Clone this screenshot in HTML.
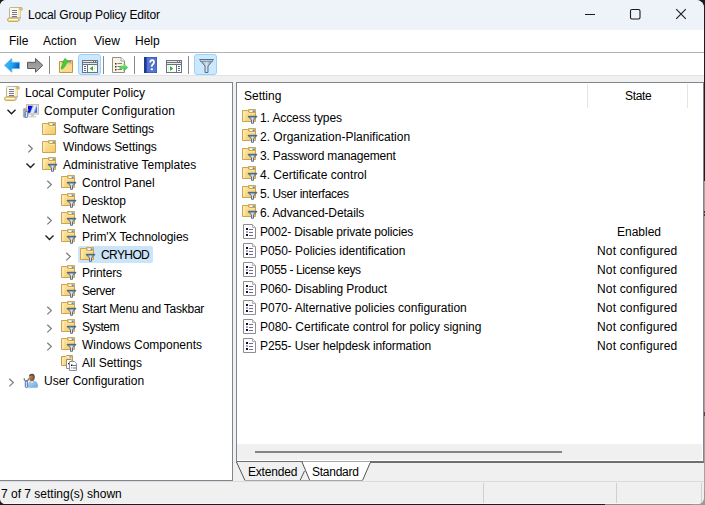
<!DOCTYPE html>
<html><head><meta charset="utf-8">
<style>
*{margin:0;padding:0;box-sizing:border-box}
html,body{width:705px;height:505px;overflow:hidden;background:#1d1d1f}
body{font-family:"Liberation Sans",sans-serif;font-size:12px;color:#000;position:relative}
.a{position:absolute}
.t{position:absolute;white-space:nowrap;line-height:18px;height:18px}
#win{position:absolute;left:0;top:0;width:704px;height:504px;background:#f0f0f0;border-radius:6px 8px 6px 5px;overflow:hidden}
svg.ov{position:absolute;left:0;top:0}
</style></head><body>
<div class="a" style="left:704px;top:181px;width:1px;height:324px;background:#a2a2a2"></div>
<div class="a" style="left:605px;top:504px;width:100px;height:1px;background:#8c8c8c"></div>
<div class="a" style="left:692px;top:490px;width:13px;height:15px;background:#9a9a9a"></div>
<div class="a" style="left:704px;top:211px;width:1px;height:2px;background:#3a3a3a"></div>
<div class="a" style="left:704px;top:214px;width:1px;height:2px;background:#3a3a3a"></div>
<div class="a" style="left:704px;top:412px;width:1px;height:4px;background:#5a3a5a"></div>
<div id="win">
 <div class="a" style="left:0;top:0;width:704px;height:30px;background:#eef2f9"></div>
 <div class="a" style="left:0;top:30px;width:704px;height:22px;background:#fff"></div>
 <div class="a" style="left:0;top:52px;width:704px;height:1px;background:#b3b3b3"></div>
 <div class="a" style="left:0;top:53px;width:704px;height:22px;background:#fff"></div>
 <div class="a" style="left:0;top:75px;width:704px;height:1px;background:#e3e3e3"></div>
 <!-- left pane -->
 <div class="a" style="left:0;top:82px;width:233px;height:399px;background:#fff;border-top:1px solid #7f848e;border-right:1px solid #7f848e;border-bottom:1px solid #7f848e"></div>
 <!-- right pane -->
 <div class="a" style="left:236px;top:82px;width:468px;height:381px;background:#fff;border:1px solid #7f848e;border-bottom:2px solid #6e6e6e"></div>
 <div class="a" style="left:237px;top:444px;width:465px;height:16px;background:#f0f0f0"></div>
 <div class="a" style="left:255px;top:451px;width:307px;height:2px;background:#858585"></div>
 <!-- header col separators -->
 <div class="a" style="left:587px;top:84px;width:1px;height:24px;background:#e5e5e5"></div>
 <div class="a" style="left:687px;top:84px;width:1px;height:24px;background:#e5e5e5"></div>
 <!-- CRYHOD highlight -->
 <div class="a" style="left:78px;top:246px;width:75px;height:17px;background:#cce4f7;border-radius:2px"></div>
 <!-- status bar -->
 <div class="a" style="left:233px;top:481px;width:471px;height:1px;background:#dcdcdc"></div>
 <div class="a" style="left:0;top:481px;width:704px;height:1px;background:#dcdcdc"></div>
 <div class="a" style="left:483px;top:483px;width:1px;height:20px;background:#d0d0d0"></div>
 <div class="a" style="left:616px;top:483px;width:1px;height:20px;background:#d0d0d0"></div>
 <div class="a" style="left:0;top:503px;width:704px;height:1px;background:#f7f7f7"></div>
 <div class="a" style="left:701px;top:483px;width:1px;height:20px;background:#d0d0d0"></div>
 <!-- pressed buttons -->
 <div class="a" style="left:78px;top:54px;width:23px;height:21px;background:#cce8ff;border:1px solid #99d1ff;border-radius:3px"></div>
 <div class="a" style="left:194px;top:54px;width:23px;height:21px;background:#cce8ff;border:1px solid #99d1ff;border-radius:3px"></div>
 <!-- toolbar separators -->
 <div class="a" style="left:49px;top:56px;width:1px;height:18px;background:#8a8a8a"></div>
 <div class="a" style="left:103px;top:56px;width:1px;height:18px;background:#8a8a8a"></div>
 <div class="a" style="left:134px;top:56px;width:1px;height:18px;background:#8a8a8a"></div>
 <div class="a" style="left:188px;top:56px;width:1px;height:18px;background:#8a8a8a"></div>
</div>
<svg class="ov" width="705" height="505" viewBox="0 0 705 505">
<defs>
 <linearGradient id="gBlue" x1="0" y1="0" x2="0" y2="1"><stop offset="0" stop-color="#5cc3f5"/><stop offset="0.5" stop-color="#1a9ae8"/><stop offset="1" stop-color="#0b6fc7"/></linearGradient>
 <linearGradient id="gGray" x1="0" y1="0" x2="0" y2="1"><stop offset="0" stop-color="#b8b8b8"/><stop offset="1" stop-color="#7a7a7a"/></linearGradient>
 <linearGradient id="gFold" x1="0" y1="0" x2="1" y2="1"><stop offset="0" stop-color="#fde9a6"/><stop offset="1" stop-color="#f2c865"/></linearGradient>
 <linearGradient id="gScr" x1="0" y1="0" x2="1" y2="0"><stop offset="0" stop-color="#2a2ad8"/><stop offset="0.45" stop-color="#1010c0"/><stop offset="0.55" stop-color="#8fa8f0"/><stop offset="1" stop-color="#c8d8ff"/></linearGradient>
 <linearGradient id="gFun" x1="0" y1="0" x2="1" y2="0"><stop offset="0" stop-color="#6d8aa6"/><stop offset="0.5" stop-color="#d5e2ee"/><stop offset="1" stop-color="#5f7d99"/></linearGradient>
 <g id="fold">
  <path d="M6.5,0.5 H13.5 V4.5 H6.5 Z" fill="#efd07e" stroke="#cda659"/>
  <rect x="8" y="1.6" width="3" height="1.4" fill="#ffffff"/>
  <rect x="10.6" y="1.6" width="2" height="1.4" fill="#3d8ee6"/>
  <path d="M0.5,1.5 H5.8 L7.2,3.5 H13.5 V12.5 H0.5 Z" fill="url(#gFold)" stroke="#caa354"/>
  <rect x="1.5" y="3" width="1" height="9" fill="#fff5cf" opacity="0.8"/>
  <rect x="7.5" y="4.2" width="5.5" height="0.8" fill="#fbe9a8"/>
 </g>
 <g id="fun">
  <path d="M0.5,0.5 H9.5 L6,4.2 V7.5 H4 V4.2 Z" fill="url(#gFun)" stroke="#4f6782" stroke-width="0.9"/>
  <rect x="0.8" y="0.3" width="8.4" height="1.3" fill="#4d6580"/>
 </g>
<g id="ffold"><use href="#fold"/><use href="#fun" x="5.5" y="6.8"/></g>
 <g id="doc">
  <path d="M0.5,0.5 H9.5 L12.5,3.5 V14.5 H0.5 Z" fill="#fdfdfd" stroke="#8e8e8e"/>
  <path d="M9.5,0.5 V3.5 H12.5" fill="#ececec" stroke="#b0b0b0"/>
  <rect x="3" y="4" width="2" height="2" fill="#111"/>
  <rect x="3" y="7" width="2" height="2" fill="#a4a4c4"/>
  <rect x="3" y="10" width="2" height="2" fill="#111"/>
  <rect x="6" y="5" width="4" height="1" fill="#6e6e9e"/>
  <rect x="6" y="8" width="4" height="1" fill="#6e6e9e"/>
  <rect x="6" y="11" width="4" height="1" fill="#6e6e9e"/>
 </g>
 <g id="scroll">
  <path d="M2.5,1.5 Q2.5,0.5 3.5,0.5 H13.5 L13.5,10.5 H2.5 Z" fill="#fdf8de" stroke="#b4b4b4"/>
  <rect x="11" y="1" width="2.5" height="9.5" fill="#f6ebbc"/>
  <circle cx="14" cy="1.9" r="1.4" fill="#e9d48a" stroke="#c6a54c" stroke-width="0.8"/>
  <rect x="5" y="3" width="5" height="1" fill="#7676a6"/>
  <rect x="5" y="5" width="5" height="1" fill="#7676a6"/>
  <rect x="5" y="7" width="5" height="1" fill="#7676a6"/>
  <rect x="5" y="9" width="5" height="1" fill="#7676a6"/>
  <rect x="0.5" y="11" width="11.5" height="3.5" rx="1.7" fill="#f1dc95" stroke="#c8a956"/>
  <rect x="2" y="12" width="8.5" height="1" fill="#fffbe4"/>
  <path d="M12,10.5 L13.5,10.5 L12.5,13.5" fill="#d8d8d8" stroke="#a0a0a0" stroke-width="0.6"/>
 </g>
</defs>
<!-- title icon -->
<use href="#scroll" x="7" y="7"/>
<!-- window controls -->
<rect x="585" y="14" width="10" height="1" fill="#1a1a1a"/>
<rect x="630.5" y="9.5" width="9.5" height="9.5" rx="1.5" fill="none" stroke="#1a1a1a" stroke-width="1.1"/>
<path d="M676.2,9.2 L685.8,18.8 M685.8,9.2 L676.2,18.8" stroke="#1a1a1a" stroke-width="1.1"/>
<!-- toolbar -->
<defs><linearGradient id="gBlue2" x1="0" y1="0" x2="1" y2="0.4"><stop offset="0" stop-color="#4cc0f8"/><stop offset="0.6" stop-color="#1ea4f0"/><stop offset="1" stop-color="#0860c0"/></linearGradient>
<linearGradient id="gGray2" x1="0" y1="0" x2="0" y2="1"><stop offset="0" stop-color="#8c8c8c"/><stop offset="0.5" stop-color="#9c9c9c"/><stop offset="1" stop-color="#b4b4b4"/></linearGradient></defs>
<path d="M4.5,65.3 L11.8,58.5 V62.3 H19.5 V68.5 H11.8 V72.2 Z" fill="url(#gBlue2)" stroke="#5cb8f0" stroke-width="1" stroke-linejoin="round"/>
<path d="M42.8,65.3 L35.5,58.5 V62.3 H27.5 V68.5 H35.5 V72.2 Z" fill="url(#gGray2)" stroke="#5a5a5a" stroke-width="1" stroke-linejoin="round"/>
<!-- folder up -->
<path d="M59.5,61.5 H64 L65,60.5 H72.5 V72.5 H59.5 Z" fill="#eac46e" stroke="#c09843"/>
<rect x="60" y="63.8" width="12" height="8.2" fill="#f8dc8c"/>
<rect x="60" y="63.5" width="12" height="0.8" fill="#e6c06a"/>
<rect x="60.2" y="62" width="1" height="10" fill="#fdeeb8"/>
<rect x="66" y="61.1" width="2.5" height="1.2" fill="#fff"/>
<rect x="68.5" y="61.1" width="2.5" height="1.2" fill="#3d8ee6"/>
<path d="M61,68.8 Q61.8,64.2 64,62.8 L62.3,62.6 L65,58.3 L68.8,62 L66.8,62.4 Q66,66.2 62.6,69 Z" fill="#3fcf3f" stroke="#2fa02f" stroke-width="0.5"/>
<!-- console tree icon -->
<rect x="82" y="60" width="16" height="13" fill="#6c737d"/>
<rect x="83" y="61" width="14" height="11" fill="#fff"/>
<rect x="83" y="61" width="14" height="1" fill="#e6e8ec"/>
<rect x="83" y="62" width="14" height="1" fill="#6c737d"/>
<rect x="83" y="63" width="14" height="1" fill="#e6e8ec"/>
<rect x="83" y="64" width="14" height="1" fill="#6c737d"/>
<rect x="93" y="61" width="1" height="1" fill="#6c737d"/>
<rect x="95" y="61" width="1" height="1" fill="#6c737d"/>
<rect x="87" y="65" width="1" height="7" fill="#6c737d"/>
<rect x="84" y="66" width="2" height="1" fill="#3f6fb8"/>
<rect x="84" y="68" width="2" height="1" fill="#3f6fb8"/>
<rect x="84" y="70" width="2" height="1" fill="#3f6fb8"/>
<rect x="94" y="65" width="1" height="7" fill="#ececec"/>
<path d="M93,66 V71 L89.6,68.5 Z" fill="#35b535"/>
<!-- export list -->
<path d="M112.5,57.5 H121 L124.5,61 V72.5 H112.5 Z" fill="#fcf5dc" stroke="#8e8e8e"/>
<path d="M121,57.5 V61 H124.5" fill="#fff" stroke="#a0a0a0"/>
<rect x="115" y="63" width="1.5" height="1.5" fill="#333"/>
<rect x="115" y="66" width="1.5" height="1.5" fill="#333"/>
<rect x="115" y="69" width="1.5" height="1.5" fill="#333"/>
<rect x="117.5" y="63" width="4.5" height="1" fill="#7a7aa8"/>
<rect x="117.5" y="66" width="4.5" height="1" fill="#7a7aa8"/>
<rect x="117.5" y="69" width="4.5" height="1" fill="#7a7aa8"/>
<defs><linearGradient id="gGrn" x1="0" y1="0" x2="0" y2="1"><stop offset="0" stop-color="#8ff08f"/><stop offset="1" stop-color="#2fb52f"/></linearGradient></defs>
<path d="M119.8,66.2 H123.8 V63.7 L127.8,67.4 L123.8,71 V68.6 H119.8 Z" fill="url(#gGrn)" stroke="#3cbf3c" stroke-width="0.5"/>
<!-- help -->
<rect x="144" y="57" width="13" height="16" fill="#2c4fb0"/>
<rect x="146.5" y="57.5" width="10" height="15" fill="#5575d0"/>
<rect x="144" y="57" width="2.5" height="16" fill="#1d3a90"/>
<path d="M150.2,62.6 Q150.3,60.2 152.2,60.2 Q154,60.3 154,62.2 Q154,63.6 152.8,64.5 Q151.8,65.3 151.8,66.8" fill="none" stroke="#2a3f80" stroke-width="2" transform="translate(0.5,0.5)" opacity="0.5"/>
<path d="M150.2,62.6 Q150.3,60.2 152.2,60.2 Q154,60.3 154,62.2 Q154,63.6 152.8,64.5 Q151.8,65.3 151.8,66.8" fill="none" stroke="#fff" stroke-width="1.8"/>
<rect x="150.9" y="68.3" width="1.9" height="1.9" fill="#fff"/>
<!-- action pane icon -->
<rect x="166" y="60" width="16" height="13" fill="#6c737d"/>
<rect x="167" y="61" width="14" height="11" fill="#fff"/>
<rect x="167" y="61" width="14" height="1" fill="#e6e8ec"/>
<rect x="167" y="62" width="14" height="1" fill="#6c737d"/>
<rect x="167" y="63" width="14" height="1" fill="#e6e8ec"/>
<rect x="167" y="64" width="14" height="1" fill="#6c737d"/>
<rect x="177" y="61" width="1" height="1" fill="#6c737d"/>
<rect x="179" y="61" width="1" height="1" fill="#6c737d"/>
<rect x="176" y="65" width="1" height="7" fill="#6c737d"/>
<rect x="178" y="66" width="2" height="1" fill="#3f6fb8"/>
<rect x="178" y="68" width="2" height="1" fill="#3f6fb8"/>
<rect x="178" y="70" width="2" height="1" fill="#3f6fb8"/>
<rect x="168" y="65" width="1" height="7" fill="#ececec"/>
<path d="M170,66 V71 L173.4,68.5 Z" fill="#35b535"/>
<!-- filter funnel -->
<path d="M199.5,59.5 H213.5 L208,66 V72.5 H205 V66 Z" fill="url(#gFun)" stroke="#56708a"/>
<rect x="200" y="60" width="13" height="1.8" fill="#5a7088"/><rect x="200.5" y="60.3" width="12" height="0.9" fill="#e8f2fa"/>
<!-- tree -->
<use href="#scroll" x="4" y="86"/>
<path d="M7.5,109.7 L11.5,113.7 L15.5,109.7" fill="none" stroke="#1e1e1e" stroke-width="1.4"/>
<!-- computer icon -->
<defs><linearGradient id="gScr2" x1="0" y1="0" x2="1" y2="0.3"><stop offset="0" stop-color="#0000c8"/><stop offset="0.42" stop-color="#0a1ad8"/><stop offset="0.55" stop-color="#c8d6ff"/><stop offset="0.75" stop-color="#f4f7ff"/><stop offset="1" stop-color="#3c64f0"/></linearGradient></defs>
<rect x="26.5" y="104.5" width="12" height="9.5" fill="#e6e2d6" stroke="#c2beb2"/>
<rect x="28" y="105.8" width="9" height="7" fill="url(#gScr2)"/>
<rect x="31" y="114" width="3" height="2" fill="#c9c5b9"/>
<rect x="29" y="116" width="7" height="1.5" fill="#d8d4c8"/>
<rect x="23.3" y="108.5" width="3" height="9" rx="1" fill="#b4b4b4" stroke="#8c8c8c" stroke-width="0.5"/>
<path d="M24.5,109.2 V110.5 L25.6,111.5 H27 L28,110.5 V109.2" fill="none" stroke="#9a9a9a" stroke-width="0.9"/>
<rect x="25.2" y="111.5" width="2.6" height="6" rx="1.1" fill="#d8e6f7" stroke="#3a5ea8" stroke-width="0.9"/>
<use href="#fold" x="42" y="122"/>
<path d="M28.3,144.8 L32.3,148.6 L28.3,152.4" fill="none" stroke="#7e7e7e" stroke-width="1.3"/>
<use href="#fold" x="42" y="140"/>
<path d="M26.5,163.6 L30.5,167.6 L34.5,163.6" fill="none" stroke="#1e1e1e" stroke-width="1.4"/>
<use href="#ffold" x="42" y="157"/>
<!-- level 3 -->
<path d="M47.3,180.8 L51.3,184.6 L47.3,188.4" fill="none" stroke="#7e7e7e" stroke-width="1.3"/>
<use href="#ffold" x="61" y="175"/>
<use href="#ffold" x="61" y="193"/>
<path d="M47.3,216.8 L51.3,220.6 L47.3,224.4" fill="none" stroke="#7e7e7e" stroke-width="1.3"/>
<use href="#ffold" x="61" y="211"/>
<path d="M45.5,235.6 L49.5,239.6 L53.5,235.6" fill="none" stroke="#1e1e1e" stroke-width="1.4"/>
<use href="#ffold" x="61" y="229"/>
<path d="M66.3,252.8 L70.3,256.6 L66.3,260.4" fill="none" stroke="#7e7e7e" stroke-width="1.3"/>
<use href="#ffold" x="80" y="247"/>
<use href="#ffold" x="61" y="265"/>
<use href="#ffold" x="61" y="283"/>
<path d="M47.3,306.8 L51.3,310.6 L47.3,314.4" fill="none" stroke="#7e7e7e" stroke-width="1.3"/>
<use href="#ffold" x="61" y="301"/>
<path d="M47.3,324.8 L51.3,328.6 L47.3,332.4" fill="none" stroke="#7e7e7e" stroke-width="1.3"/>
<use href="#ffold" x="61" y="319"/>
<path d="M47.3,342.8 L51.3,346.6 L47.3,350.4" fill="none" stroke="#7e7e7e" stroke-width="1.3"/>
<use href="#ffold" x="61" y="337"/>
<!-- all settings -->
<path d="M61.5,356.5 H65.5 L66.5,355.5 H72.5 V365.5 H61.5 Z" fill="url(#gFold)" stroke="#c39c4a"/>
<rect x="62.3" y="357.5" width="1" height="7.5" fill="#fff3c8" opacity="0.8"/>
<rect x="67.5" y="356.3" width="2" height="1" fill="#fff"/>
<rect x="69.5" y="356.3" width="2" height="1" fill="#3d8ee6"/>
<path d="M66.5,359.5 H71 L72.5,361 V368.5 H66.5 Z" fill="#fff" stroke="#8e8e8e"/>
<rect x="68" y="363" width="1.3" height="1.3" fill="#222"/>
<path d="M69.5,361.5 H74.5 L76.5,363.5 V370.5 H69.5 Z" fill="#fff" stroke="#8e8e8e"/>
<rect x="71" y="364.5" width="1.5" height="1.5" fill="#111"/>
<rect x="73" y="365" width="3" height="1" fill="#6e6e9e"/>
<rect x="71" y="367.3" width="1.5" height="1.2" fill="#9a9ac0"/>
<rect x="73" y="367.5" width="3" height="1" fill="#6e6e9e"/>
<!-- user configuration -->
<path d="M9.3,378.8 L13.3,382.6 L9.3,386.4" fill="none" stroke="#7e7e7e" stroke-width="1.3"/>
<defs><linearGradient id="gFace" x1="0" y1="0" x2="1" y2="1"><stop offset="0" stop-color="#d49a6a"/><stop offset="1" stop-color="#7a3f18"/></linearGradient>
<linearGradient id="gShirt" x1="0" y1="0" x2="1" y2="1"><stop offset="0" stop-color="#b5d8f5"/><stop offset="1" stop-color="#6ea6d8"/></linearGradient></defs>
<path d="M28.5,387.6 Q28.5,381.5 31,380.8 L33.5,380.8 Q37.8,381.8 37.8,386 Q37.8,387.6 36.5,387.6 Z" fill="url(#gShirt)" stroke="#7aaad6" stroke-width="0.5"/>
<path d="M31,381 L32,383.5 L33.2,381 Z" fill="#fff"/>
<path d="M29,377.5 Q29,374 31.8,374 Q34.5,374 34.5,377.5 Q34.5,381.3 31.8,381.3 Q29,381.3 29,377.5 Z" fill="url(#gFace)"/>
<path d="M29,376.6 Q29.2,373.8 32,373.8 Q35,374 34.6,377.8 L34,379.5 Q33.8,376 32.5,375.6 Q30.5,375.3 29,376.6 Z" fill="#4a4a4a"/>
<path d="M24.3,378.2 V379.8 L25.5,381 H27.2 L28.4,379.8 V378.2" fill="none" stroke="#7e7e7e" stroke-width="1.3"/>
<rect x="25.3" y="381.2" width="2.4" height="6.4" rx="1.1" fill="#cfe0f5" stroke="#3a5ea8" stroke-width="0.9"/>
<!-- right pane icons -->
<use href="#ffold" x="242" y="109"/>
<use href="#ffold" x="242" y="128"/>
<use href="#ffold" x="242" y="147"/>
<use href="#ffold" x="242" y="166"/>
<use href="#ffold" x="242" y="185"/>
<use href="#ffold" x="242" y="204"/>
<use href="#doc" x="243" y="224"/>
<use href="#doc" x="243" y="243"/>
<use href="#doc" x="243" y="262"/>
<use href="#doc" x="243" y="281"/>
<use href="#doc" x="243" y="300"/>
<use href="#doc" x="243" y="319"/>
<use href="#doc" x="243" y="338"/>
<!-- tabs -->
<path d="M236.5,462 L245,480 H300 L308.5,462 Z" fill="#f0f0f0"/>
<path d="M302,462 L309.5,480 H362.8 L370.5,462 Z" fill="#fff"/>
<path d="M236.5,462 L245,480.5 M300,480.5 L304.5,471" fill="none" stroke="#555" stroke-width="1"/>
<path d="M302,462 L309.8,480.5 M362.5,480.5 L370.5,462" fill="none" stroke="#555" stroke-width="1"/>
<rect x="245" y="480" width="118" height="1" fill="#a6a6a6"/>
<rect x="303" y="461" width="67" height="1" fill="#a8a8a8"/>
<rect x="303" y="462" width="67" height="1" fill="#fff"/>
</svg>

<div class="t" style="left:28px;top:6px;letter-spacing:-0.14px">Local Group Policy Editor</div>
<div class="t" style="left:9px;top:32px">File</div>
<div class="t" style="left:43px;top:32px">Action</div>
<div class="t" style="left:94px;top:32px">View</div>
<div class="t" style="left:135px;top:32px">Help</div>
<div class="t" style="left:1px;top:485px">7 of 7 setting(s) shown</div>

<div class="t" style="left:25px;top:84px">Local Computer Policy</div>
<div class="t" style="left:44px;top:102px;letter-spacing:0.17px">Computer Configuration</div>
<div class="t" style="left:63px;top:120px;letter-spacing:-0.19px">Software Settings</div>
<div class="t" style="left:63px;top:138px;letter-spacing:-0.10px">Windows Settings</div>
<div class="t" style="left:63px;top:156px">Administrative Templates</div>
<div class="t" style="left:82px;top:174px">Control Panel</div>
<div class="t" style="left:82px;top:192px">Desktop</div>
<div class="t" style="left:82px;top:210px">Network</div>
<div class="t" style="left:82px;top:228px;letter-spacing:-0.09px">Prim'X Technologies</div>
<div class="t" style="left:101px;top:246px;letter-spacing:-0.60px">CRYHOD</div>
<div class="t" style="left:82px;top:264px;letter-spacing:-0.19px">Printers</div>
<div class="t" style="left:82px;top:282px;letter-spacing:-0.44px">Server</div>
<div class="t" style="left:82px;top:300px;letter-spacing:-0.23px">Start Menu and Taskbar</div>
<div class="t" style="left:82px;top:318px;letter-spacing:-0.52px">System</div>
<div class="t" style="left:82px;top:336px">Windows Components</div>
<div class="t" style="left:82px;top:354px">All Settings</div>
<div class="t" style="left:44px;top:372px">User Configuration</div>

<div class="t" style="left:244px;top:87px">Setting</div>
<div class="t" style="left:625px;top:87px;letter-spacing:-0.35px">State</div>
<div class="t" style="left:260px;top:109px;letter-spacing:-0.10px">1. Access types</div>
<div class="t" style="left:260px;top:128px">2. Organization-Planification</div>
<div class="t" style="left:260px;top:147px;letter-spacing:-0.17px">3. Password management</div>
<div class="t" style="left:260px;top:166px">4. Certificate control</div>
<div class="t" style="left:260px;top:185px;letter-spacing:-0.29px">5. User interfaces</div>
<div class="t" style="left:260px;top:204px;letter-spacing:-0.14px">6. Advanced-Details</div>
<div class="t" style="left:260px;top:223px;letter-spacing:-0.17px">P002- Disable private policies</div>
<div class="t" style="left:260px;top:242px;letter-spacing:-0.05px">P050- Policies identification</div>
<div class="t" style="left:260px;top:261px;letter-spacing:-0.39px">P055 - License keys</div>
<div class="t" style="left:260px;top:280px;letter-spacing:-0.11px">P060- Disabling Product</div>
<div class="t" style="left:260px;top:299px">P070- Alternative policies configuration</div>
<div class="t" style="left:260px;top:318px">P080- Certificate control for policy signing</div>
<div class="t" style="left:260px;top:337px;letter-spacing:-0.12px">P255- User helpdesk information</div>
<div class="t" style="left:617px;top:223px">Enabled</div>
<div class="t" style="left:597px;top:242px;letter-spacing:0.17px">Not configured</div>
<div class="t" style="left:597px;top:261px;letter-spacing:0.17px">Not configured</div>
<div class="t" style="left:597px;top:280px;letter-spacing:0.17px">Not configured</div>
<div class="t" style="left:597px;top:299px;letter-spacing:0.17px">Not configured</div>
<div class="t" style="left:597px;top:318px;letter-spacing:0.17px">Not configured</div>
<div class="t" style="left:597px;top:337px;letter-spacing:0.17px">Not configured</div>
<div class="t" style="left:248px;top:463px;letter-spacing:-0.2px">Extended</div>
<div class="t" style="left:312px;top:463px;letter-spacing:-0.25px">Standard</div>
</body></html>
